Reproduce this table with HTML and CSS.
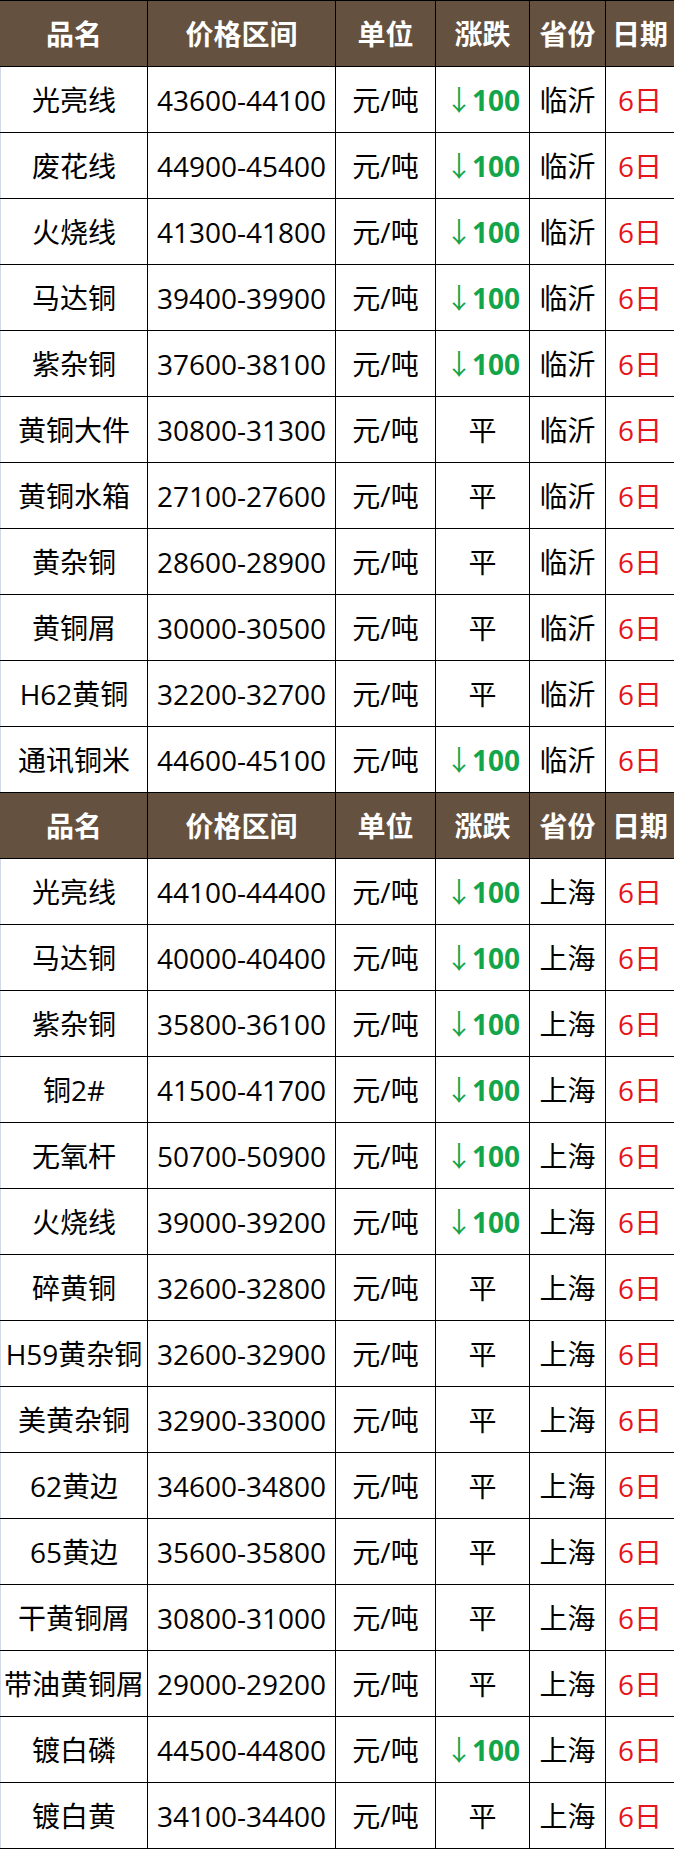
FILE: index.html
```html
<!DOCTYPE html>
<html lang="zh-CN">
<head>
<meta charset="utf-8">
<title>铜价</title>
<link rel="stylesheet" href="styles.css">
</head>
<body>
<table class="price">
<colgroup>
<col class="c1"><col class="c2"><col class="c3"><col class="c4"><col class="c5"><col class="c6">
</colgroup>
<tbody>
<tr class="head"><th>品名</th><th>价格区间</th><th>单位</th><th>涨跌</th><th>省份</th><th class="last">日期</th></tr>
<tr><td>光亮线</td><td>43600-44100</td><td>元/吨</td><td class="down"><span class="arrow">↓</span>100</td><td>临沂</td><td class="day">6日</td></tr>
<tr><td>废花线</td><td>44900-45400</td><td>元/吨</td><td class="down"><span class="arrow">↓</span>100</td><td>临沂</td><td class="day">6日</td></tr>
<tr><td>火烧线</td><td>41300-41800</td><td>元/吨</td><td class="down"><span class="arrow">↓</span>100</td><td>临沂</td><td class="day">6日</td></tr>
<tr><td>马达铜</td><td>39400-39900</td><td>元/吨</td><td class="down"><span class="arrow">↓</span>100</td><td>临沂</td><td class="day">6日</td></tr>
<tr><td>紫杂铜</td><td>37600-38100</td><td>元/吨</td><td class="down"><span class="arrow">↓</span>100</td><td>临沂</td><td class="day">6日</td></tr>
<tr><td>黄铜大件</td><td>30800-31300</td><td>元/吨</td><td>平</td><td>临沂</td><td class="day">6日</td></tr>
<tr><td>黄铜水箱</td><td>27100-27600</td><td>元/吨</td><td>平</td><td>临沂</td><td class="day">6日</td></tr>
<tr><td>黄杂铜</td><td>28600-28900</td><td>元/吨</td><td>平</td><td>临沂</td><td class="day">6日</td></tr>
<tr><td>黄铜屑</td><td>30000-30500</td><td>元/吨</td><td>平</td><td>临沂</td><td class="day">6日</td></tr>
<tr><td>H62黄铜</td><td>32200-32700</td><td>元/吨</td><td>平</td><td>临沂</td><td class="day">6日</td></tr>
<tr><td>通讯铜米</td><td>44600-45100</td><td>元/吨</td><td class="down"><span class="arrow">↓</span>100</td><td>临沂</td><td class="day">6日</td></tr>
<tr class="head"><th>品名</th><th>价格区间</th><th>单位</th><th>涨跌</th><th>省份</th><th class="last">日期</th></tr>
<tr><td>光亮线</td><td>44100-44400</td><td>元/吨</td><td class="down"><span class="arrow">↓</span>100</td><td>上海</td><td class="day">6日</td></tr>
<tr><td>马达铜</td><td>40000-40400</td><td>元/吨</td><td class="down"><span class="arrow">↓</span>100</td><td>上海</td><td class="day">6日</td></tr>
<tr><td>紫杂铜</td><td>35800-36100</td><td>元/吨</td><td class="down"><span class="arrow">↓</span>100</td><td>上海</td><td class="day">6日</td></tr>
<tr><td>铜2#</td><td>41500-41700</td><td>元/吨</td><td class="down"><span class="arrow">↓</span>100</td><td>上海</td><td class="day">6日</td></tr>
<tr><td>无氧杆</td><td>50700-50900</td><td>元/吨</td><td class="down"><span class="arrow">↓</span>100</td><td>上海</td><td class="day">6日</td></tr>
<tr><td>火烧线</td><td>39000-39200</td><td>元/吨</td><td class="down"><span class="arrow">↓</span>100</td><td>上海</td><td class="day">6日</td></tr>
<tr><td>碎黄铜</td><td>32600-32800</td><td>元/吨</td><td>平</td><td>上海</td><td class="day">6日</td></tr>
<tr><td>H59黄杂铜</td><td>32600-32900</td><td>元/吨</td><td>平</td><td>上海</td><td class="day">6日</td></tr>
<tr><td>美黄杂铜</td><td>32900-33000</td><td>元/吨</td><td>平</td><td>上海</td><td class="day">6日</td></tr>
<tr><td>62黄边</td><td>34600-34800</td><td>元/吨</td><td>平</td><td>上海</td><td class="day">6日</td></tr>
<tr><td>65黄边</td><td>35600-35800</td><td>元/吨</td><td>平</td><td>上海</td><td class="day">6日</td></tr>
<tr><td>干黄铜屑</td><td>30800-31000</td><td>元/吨</td><td>平</td><td>上海</td><td class="day">6日</td></tr>
<tr><td>带油黄铜屑</td><td>29000-29200</td><td>元/吨</td><td>平</td><td>上海</td><td class="day">6日</td></tr>
<tr><td>镀白磷</td><td>44500-44800</td><td>元/吨</td><td class="down"><span class="arrow">↓</span>100</td><td>上海</td><td class="day">6日</td></tr>
<tr><td>镀白黄</td><td>34100-34400</td><td>元/吨</td><td>平</td><td>上海</td><td class="day">6日</td></tr>
</tbody>
</table>
</body>
</html>
```
FILE: styles.css
```css
html, body {
  margin: 0;
  padding: 0;
  background: #ffffff;
}

.price {
  width: 674px;
  table-layout: fixed;
  border-collapse: collapse;
  font-family: "Open Sans", "Noto Sans CJK SC", sans-serif;
  font-size: 28px;
  color: #000000;
}

.c1 { width: 147px; }
.c2 { width: 188px; }
.c3 { width: 100px; }
.c4 { width: 94px; }
.c5 { width: 76px; }
.c6 { width: 69px; }

.price tr {
  height: 66px;
}

.price td,
.price th {
  border: 1px solid #000000;
  padding: 0;
  text-align: center;
  vertical-align: middle;
  white-space: nowrap;
  line-height: 1;
}

.price td:first-child {
  border-left-color: #d0d7e5;
}

.head th {
  background: #65513f;
  color: #ffffff;
  font-weight: 700;
}

.head th:first-child {
  border-left-color: #65513f;
}

.head th.last {
  border-right-color: #e3cf1f;
}

.down {
  color: #12a54a;
  font-weight: 700;
}

.arrow {
  font-weight: 400;
  margin-right: -1px;
}

.day {
  color: #e8141b;
}
```
